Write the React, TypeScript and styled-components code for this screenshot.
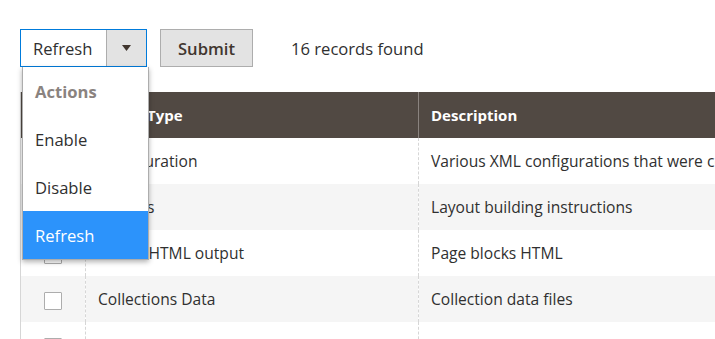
import React from "react";
import styled, { createGlobalStyle } from "styled-components";

const GlobalStyle = createGlobalStyle`
  html, body {
    margin: 0;
    padding: 0;
    background: #ffffff;
    overflow: hidden;
  }
  body {
    font-family: "Open Sans", "Liberation Sans", sans-serif;
    color: #303030;
    font-size: 16.6px;
  }
`;

const Page = styled.div`
  padding: 29px 0 0 20px;
  width: 1000px;
`;

const Toolbar = styled.div`
  display: flex;
  align-items: center;
  height: 38px;
`;

const ActionSelect = styled.div`
  position: relative;
  display: flex;
  width: 127px;
  height: 38px;
  box-sizing: border-box;
  border: 1px solid #007bdb;
  background: #ffffff;
`;

const SelectLabel = styled.div`
  flex: 1;
  display: flex;
  align-items: center;
  padding-left: 12px;
  color: #303030;
`;

const SelectArrow = styled.div`
  width: 39px;
  display: flex;
  align-items: center;
  justify-content: center;
  background: #e3e3e3;
  border-left: 1px solid #adadad;
`;

const Menu = styled.ul`
  position: absolute;
  top: 37px;
  left: 1px;
  width: 125px;
  margin: 0;
  padding: 0;
  list-style: none;
  background: #ffffff;
  border: 1px solid #adadad;
  border-top: none;
  box-shadow: 0 2px 5px rgba(0, 0, 0, 0.3);
  z-index: 10;
`;

const MenuItem = styled.li<{ $active?: boolean; $title?: boolean }>`
  height: 48px;
  display: flex;
  align-items: center;
  padding-left: 12px;
  font-weight: ${(p) => (p.$title ? 700 : 400)};
  color: ${(p) => (p.$title ? "#8a837f" : p.$active ? "#ffffff" : "#303030")};
  background: ${(p) => (p.$active ? "#2c93fb" : "transparent")};
`;

const SubmitButton = styled.button`
  margin-left: 13px;
  width: 93px;
  height: 38px;
  background: #e3e3e3;
  border: 1px solid #adadad;
  font-family: inherit;
  font-size: 16.6px;
  font-weight: 600;
  color: #41362f;
  padding: 0;
`;

const RecordCount = styled.span`
  margin-left: 38px;
  color: #303030;
`;

const Grid = styled.table`
  margin-top: 25px;
  width: 980px;
  table-layout: fixed;
  border-collapse: collapse;
  border-left: 1px solid #d6d6d6;
`;

const HeadCell = styled.th`
  height: 46px;
  box-sizing: border-box;
  background: #514943;
  color: #ffffff;
  font-size: 15px;
  font-weight: 700;
  text-align: left;
  padding: 0 12px;
  border-left: 1px solid #8a837f;
  &:first-child {
    border-left: none;
  }
`;

const Row = styled.tr<{ $odd: boolean }>`
  background: ${(p) => (p.$odd ? "#f5f5f5" : "#ffffff")};
`;

const Cell = styled.td`
  height: 46px;
  box-sizing: border-box;
  padding: 0 12px;
  font-size: 15.6px;
  border-left: 1px dashed #d6d6d6;
  white-space: nowrap;
  overflow: hidden;
  &:first-child {
    border-left: none;
  }
`;

const CheckCell = styled(Cell)`
  padding: 0;
  text-align: center;
`;

const Checkbox = styled.span`
  display: inline-block;
  width: 18px;
  height: 18px;
  box-sizing: border-box;
  border: 1px solid #adadad;
  border-radius: 1px;
  background: #ffffff;
  vertical-align: middle;
`;

const rows = [
  ["Configuration", "Various XML configurations that were collected across modules and merged"],
  ["Layouts", "Layout building instructions"],
  ["Blocks HTML output", "Page blocks HTML"],
  ["Collections Data", "Collection data files"],
  ["", ""],
];

const App = () => {
  return (
    <Page>
      <GlobalStyle />
      <Toolbar>
        <ActionSelect>
          <SelectLabel>Refresh</SelectLabel>
          <SelectArrow>
            <svg width="9" height="6" viewBox="0 0 9 6">
              <path d="M0 0 L9 0 L4.5 6 Z" fill="#41362f" />
            </svg>
          </SelectArrow>
          <Menu>
            <MenuItem $title>Actions</MenuItem>
            <MenuItem>Enable</MenuItem>
            <MenuItem>Disable</MenuItem>
            <MenuItem $active>Refresh</MenuItem>
          </Menu>
        </ActionSelect>
        <SubmitButton>Submit</SubmitButton>
        <RecordCount>16 records found</RecordCount>
      </Toolbar>
      <Grid>
        <colgroup>
          <col style={{ width: 65 }} />
          <col style={{ width: 333 }} />
          <col />
        </colgroup>
        <thead>
          <tr>
            <HeadCell />
            <HeadCell>Cache Type</HeadCell>
            <HeadCell>Description</HeadCell>
          </tr>
        </thead>
        <tbody>
          {rows.map(([type, desc], i) => (
            <Row key={i} $odd={i % 2 === 1}>
              <CheckCell>
                <Checkbox />
              </CheckCell>
              <Cell>{type}</Cell>
              <Cell>{desc}</Cell>
            </Row>
          ))}
        </tbody>
      </Grid>
    </Page>
  );
};

export default App;
